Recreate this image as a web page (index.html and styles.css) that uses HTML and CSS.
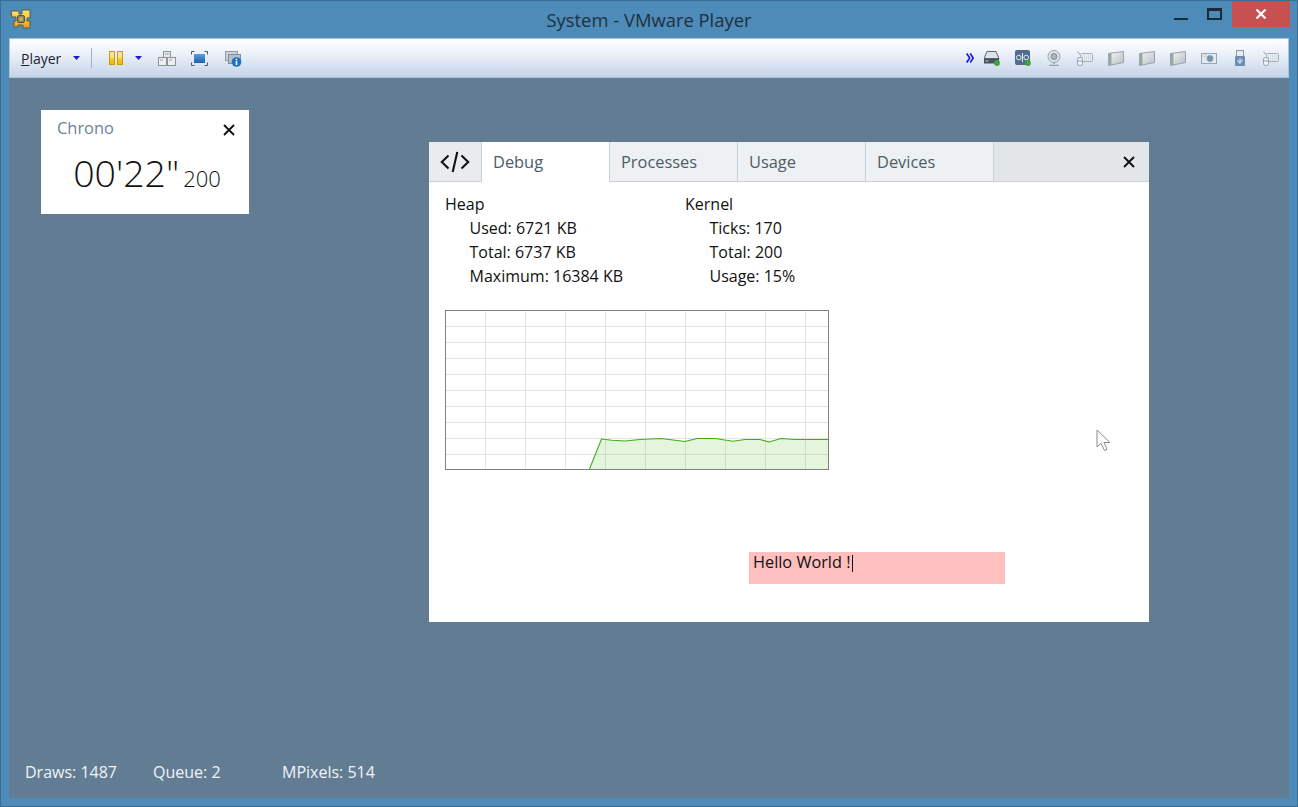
FILE: index.html
```html
<!DOCTYPE html>
<html lang="en">
<head>
    <meta charset="UTF-8">
    <title>System - VMware Player</title>
    <link rel="stylesheet" href="styles.css">
</head>
<body>
    <svg class="defs" width="0" height="0">
        <defs>
            <linearGradient id="logoFill" x1="0" y1="0" x2="0" y2="1">
                <stop offset="0" stop-color="#ffe27a"/>
                <stop offset="0.5" stop-color="#fcc43a"/>
                <stop offset="1" stop-color="#ee9a1c"/>
            </linearGradient>
            <linearGradient id="pauseFill" x1="0" y1="0" x2="0" y2="1">
                <stop offset="0" stop-color="#fbe89a"/>
                <stop offset="0.5" stop-color="#fde178"/>
                <stop offset="0.55" stop-color="#f8c820"/>
                <stop offset="1" stop-color="#f3b800"/>
            </linearGradient>
            <linearGradient id="diskFill" x1="0" y1="0" x2="1" y2="1">
                <stop offset="0" stop-color="#f6f8f8"/>
                <stop offset="1" stop-color="#b4bec2"/>
            </linearGradient>
            <linearGradient id="screenFill" x1="0" y1="0" x2="0" y2="1">
                <stop offset="0" stop-color="#5aa0e0"/>
                <stop offset="1" stop-color="#1c5fb0"/>
            </linearGradient>
            <symbol id="keyboard" viewBox="0 0 16 15">
                <path d="M0.5 0.5l3 3.5" stroke="#8f9ca6" fill="none"/>
                <rect x="3.5" y="2.5" width="12" height="8" rx="1" fill="#e8edf0" stroke="#a3afb8"/>
                <path d="M5 5h9M5 7h9M5 9h9" stroke="#c2ccd2" stroke-dasharray="1 1"/>
                <rect x="0.5" y="6.5" width="5" height="8" rx="2" fill="#f0f3f5" stroke="#93a0aa"/>
                <path d="M1 10h4" stroke="#93a0aa"/>
            </symbol>
            <symbol id="disk" viewBox="0 0 16 15">
                <path d="M0.5 2.5l15-2v11l-15 3z" fill="url(#diskFill)" stroke="#97a3a8"/>
                <path d="M0.5 2.5l3-.5v11.9l-3 .6z" fill="#9aa8ab"/>
                <rect x="1.2" y="10.5" width="1.4" height="1.6" fill="#8bc45a"/>
            </symbol>
            <symbol id="arrowDown" viewBox="0 0 7 4">
                <path d="M0 0h7L3.5 4z" fill="#1a1ad8"/>
            </symbol>
        </defs>
    </svg>

    <div class="window">
        <header class="titlebar">
            <svg class="app-logo" width="21" height="20" viewBox="0 0 21 20">
                <path d="M1 2h8v3h3V1h8v8h-3v3h3v7h-7v-3H8v2H4v-6h2V8H2z" fill="url(#logoFill)" stroke="#5d5a48"/>
                <rect x="7.5" y="6.5" width="7" height="7" rx="1.5" fill="#8a8672" stroke="#4c5560"/>
                <rect x="9.5" y="8.5" width="3" height="3" fill="#e8b83a"/>
            </svg>
            <span class="title">System - VMware Player</span>
            <div class="win-controls">
                <span class="win-min"></span>
                <span class="win-max"></span>
                <span class="win-close">
                    <svg width="12" height="10" viewBox="0 0 12 10"><path d="M1.5 0.5l9 9M10.5 0.5l-9 9" stroke="#fff" stroke-width="2.2"/></svg>
                </span>
            </div>
        </header>

        <nav class="toolbar">
            <span class="menu-label"><u>P</u>layer</span>
            <svg class="arrow arrow-player" width="7" height="4"><use href="#arrowDown"/></svg>
            <span class="tool-sep"></span>
            <svg class="tool-pause" width="14" height="14" viewBox="0 0 14 14">
                <rect x="0.5" y="0.5" width="5" height="13" fill="url(#pauseFill)" stroke="#c79a10"/>
                <rect x="8.5" y="0.5" width="5" height="13" fill="url(#pauseFill)" stroke="#c79a10"/>
            </svg>
            <svg class="arrow arrow-pause" width="7" height="4"><use href="#arrowDown"/></svg>
            <svg class="tool-keys" width="18" height="15" viewBox="0 0 18 15">
                <rect x="5.5" y="0.5" width="7" height="6" fill="#e6e9eb" stroke="#8f9396"/>
                <rect x="0.5" y="6.5" width="8" height="8" fill="#eceff1" stroke="#8f9396"/>
                <rect x="9.5" y="6.5" width="8" height="8" fill="#eceff1" stroke="#8f9396"/>
                <path d="M7 3h4M2 9h3M11 9h3" stroke="#9a9ea1"/>
            </svg>
            <svg class="tool-full" width="17" height="15" viewBox="0 0 17 15">
                <rect x="3" y="3" width="11" height="9" fill="url(#screenFill)"/>
                <path d="M0.5 3.5v-3h3M13.5 0.5h3v3M16.5 11.5v3h-3M3.5 14.5h-3v-3" stroke="#4b5a66" fill="none"/>
            </svg>
            <svg class="tool-info" width="17" height="16" viewBox="0 0 17 16">
                <rect x="0.5" y="0.5" width="12" height="9" fill="#c9d2d9" stroke="#8f9ca8"/>
                <rect x="3.5" y="3.5" width="12" height="9" fill="#b4bfc9" stroke="#8090a0"/>
                <circle cx="11.5" cy="11" r="4.8" fill="#1f6fc0"/>
                <path d="M11.5 7.8v1.4M11.5 10v4" stroke="#fff" stroke-width="1.6"/>
            </svg>

            <div class="device-tray">
                <svg class="tray-more" width="8" height="10" viewBox="0 0 8 10"><path d="M0.7 0.5l3 4.5-3 4.5M4.2 0.5l3 4.5-3 4.5" stroke="#1414e0" stroke-width="1.6" fill="none"/></svg>
                <svg class="device-hdd" width="16" height="15" viewBox="0 0 16 15">
                    <path d="M3 0.5h9l3 7H0z" fill="#dfe3e6" stroke="#5f6a72"/>
                    <rect x="0" y="7.5" width="15" height="5" fill="#465260"/>
                    <rect x="1.5" y="9.5" width="3" height="1" fill="#c6ccd0"/>
                    <circle cx="13" cy="12" r="2.9" fill="#3fa535"/>
                </svg>
                <svg class="device-tape" width="16" height="16" viewBox="0 0 16 16">
                    <rect x="0" y="0" width="15" height="15" rx="2" fill="#4f6c8c"/>
                    <circle cx="3.8" cy="7.5" r="2.3" fill="none" stroke="#e6edf3"/>
                    <circle cx="11.2" cy="7.5" r="2.3" fill="none" stroke="#e6edf3"/>
                    <path d="M7.5 3v9" stroke="#e6edf3"/>
                    <circle cx="13" cy="13" r="2.9" fill="#3fa535"/>
                </svg>
                <svg class="device-cam" width="14" height="16" viewBox="0 0 14 16">
                    <circle cx="7" cy="6.5" r="6" fill="#dde3e8" stroke="#97a3ac"/>
                    <circle cx="7" cy="6.5" r="3" fill="#a9b6c0" stroke="#7f8c96"/>
                    <path d="M7 12.5v1.5M2 15.5h10" stroke="#97a3ac" stroke-width="1.4"/>
                </svg>
                <svg class="device-kb" width="16" height="15"><use href="#keyboard"/></svg>
                <svg class="device-disk" width="16" height="15"><use href="#disk"/></svg>
                <svg class="device-disk" width="16" height="15"><use href="#disk"/></svg>
                <svg class="device-disk" width="16" height="15"><use href="#disk"/></svg>
                <svg class="device-photo" width="16" height="12" viewBox="0 0 16 12">
                    <rect x="0.5" y="1.5" width="15" height="10" fill="#e4eaee" stroke="#9aa8b2"/>
                    <circle cx="9" cy="6.5" r="3" fill="#6f95b5" stroke="#8aa0b0"/>
                    <rect x="2" y="3" width="3" height="1.5" fill="#fff" stroke="#a7b3bb" stroke-width="0.5"/>
                </svg>
                <svg class="device-usb" width="10" height="16" viewBox="0 0 10 16">
                    <rect x="1.5" y="0.5" width="7" height="6" fill="#e8ecef" stroke="#8f9aa3"/>
                    <rect x="0" y="6" width="10" height="10" rx="1" fill="#6f8cb4"/>
                    <path d="M5 8v6M3 10v1.5l2 1M7 9.5v1.5l-2 1" stroke="#e6edf3" fill="none"/>
                </svg>
                <svg class="device-kb" width="16" height="15"><use href="#keyboard"/></svg>
            </div>
        </nav>

        <main class="desktop">
            <section class="chrono">
                <div class="chrono-head">
                    <span class="chrono-title">Chrono</span>
                    <svg class="close-x chrono-close" width="12" height="12" viewBox="0 0 12 12"><path d="M1 1l10 10M11 1L1 11" stroke="#111" stroke-width="1.9"/></svg>
                </div>
                <div class="chrono-time">00'22"<small>200</small></div>
            </section>

            <section class="debug">
                <div class="tabs">
                    <div class="tab tab-code">
                        <svg width="30" height="22" viewBox="0 0 30 22"><path d="M8.5 4.5L1.8 11l6.7 6.5M21.5 4.5L28.2 11l-6.7 6.5M17.3 1L12.7 21" stroke="#111" stroke-width="2.1" fill="none"/></svg>
                    </div>
                    <div class="tab tab-active">Debug</div>
                    <div class="tab">Processes</div>
                    <div class="tab">Usage</div>
                    <div class="tab">Devices</div>
                    <div class="tab-rest">
                        <svg class="close-x" width="12" height="12" viewBox="0 0 12 12"><path d="M1 1l10 10M11 1L1 11" stroke="#111" stroke-width="1.9"/></svg>
                    </div>
                </div>

                <div class="debug-body">
                    <div class="stats">
                        <div class="stat-col">
                            <div>Heap</div>
                            <div class="stat-row">Used: 6721 KB</div>
                            <div class="stat-row">Total: 6737 KB</div>
                            <div class="stat-row">Maximum: 16384 KB</div>
                        </div>
                        <div class="stat-col">
                            <div>Kernel</div>
                            <div class="stat-row">Ticks: 170</div>
                            <div class="stat-row">Total: 200</div>
                            <div class="stat-row">Usage: 15%</div>
                        </div>
                    </div>

                    <svg class="chart" width="384" height="160" viewBox="0 0 384 160">
                        <path class="chart-grid" d="M40.5 0V160M80.5 0V160M120.5 0V160M160.5 0V160M200.5 0V160M240.5 0V160M280.5 0V160M320.5 0V160M360.5 0V160M0 16.5H384M0 32.5H384M0 48.5H384M0 64.5H384M0 80.5H384M0 96.5H384M0 112.5H384M0 128.5H384M0 144.5H384"/>
                        <path class="chart-area" d="M144.5 159L156.5 129L167 130.3L180 131L195 129.5L216 128.5L240 131.5L252 128.5L270 128.5L288 131.3L300 129.5L315 129.5L324 132L336 128.5L350 129.5L383 129.5V159Z"/>
                        <path class="chart-line" d="M144.5 159L156.5 129L167 130.3L180 131L195 129.5L216 128.5L240 131.5L252 128.5L270 128.5L288 131.3L300 129.5L315 129.5L324 132L336 128.5L350 129.5L383 129.5"/>
                        <rect class="chart-frame" x="0.5" y="0.5" width="383" height="159"/>
                    </svg>

                    <div class="hello">Hello World !<span class="caret"></span></div>
                </div>

                <svg class="mouse" width="16" height="23" viewBox="0 0 16 23">
                    <path d="M1 1V18L5 14.3L8.5 21.5L11 20.3L8 13.5H14Z" fill="#fff" stroke="#8a8a8a"/>
                </svg>
            </section>

            <footer class="status">
                <span class="status-draws">Draws: 1487</span>
                <span class="status-queue">Queue: 2</span>
                <span>MPixels: 514</span>
            </footer>
        </main>
    </div>
</body>
</html>
```

FILE: styles.css
```css
html, body {
    margin: 0;
    height: 100%;
}
body {
    font-family: "Open Sans", sans-serif;
    overflow: hidden;
}
.defs {
    position: absolute;
}
svg {
    display: block;
    flex: none;
}
.window {
    width: 1298px;
    height: 807px;
    box-sizing: border-box;
    background-color: #4d8bb9;
    border: 1px solid #3b6e94;
    padding: 0 8px 8px 8px;
    display: flex;
    flex-direction: column;
}

/* title bar */
.titlebar {
    height: 37px;
    flex: none;
    position: relative;
    display: flex;
    align-items: flex-start;
}
.app-logo {
    margin: 8px 0 0 1px;
}
.title {
    position: absolute;
    left: 0;
    right: 0;
    top: 6px;
    text-align: center;
    font-size: 18.4px;
    line-height: 26px;
    color: #22303e;
}
.win-controls {
    margin-left: auto;
    margin-right: -1px;
    display: flex;
    align-items: flex-start;
}
.win-min {
    width: 14px;
    height: 2px;
    margin-top: 17px;
    background-color: #1c2a38;
}
.win-max {
    width: 11px;
    height: 7px;
    margin: 7px 0 0 19px;
    border: 2px solid #1c2a38;
    border-top-width: 3px;
}
.win-close {
    width: 58px;
    height: 26px;
    margin-left: 10px;
    background-color: #c75050;
    display: flex;
    align-items: center;
    justify-content: center;
}

/* toolbar */
.toolbar {
    height: 40px;
    flex: none;
    box-sizing: border-box;
    border: 1px solid #a9c3da;
    background: linear-gradient(#fdfeff, #eef3fa 35%, #c4d4e8);
    display: flex;
    align-items: center;
    padding-left: 11px;
}
.menu-label {
    font-size: 14px;
    color: #1e2430;
    margin-top: 1px;
}
.arrow-player {
    margin-left: 12px;
}
.tool-sep {
    width: 1px;
    height: 20px;
    background-color: #9db3c9;
    margin-left: 11px;
}
.tool-pause {
    margin-left: 17px;
}
.arrow-pause {
    margin-left: 12px;
}
.tool-keys {
    margin-left: 16px;
}
.tool-full {
    margin-left: 15px;
}
.tool-info {
    margin-left: 17px;
    margin-top: 2px;
}
.device-tray {
    margin-left: auto;
    margin-right: 9px;
    display: flex;
    align-items: center;
    gap: 15px;
}
.tray-more {
    margin-right: -5px;
}
.device-cam,
.device-kb {
    margin-left: 1px;
}
.device-kb + .device-disk {
    margin-left: 0;
}
.device-usb {
    margin-left: 3px;
    margin-right: 2px;
}

/* desktop */
.desktop {
    flex: 1;
    position: relative;
    background-color: #627c94;
    display: flex;
    flex-direction: column;
    justify-content: flex-end;
}
.chrono {
    position: absolute;
    left: 32px;
    top: 32px;
    width: 208px;
    height: 104px;
    background-color: #fff;
}
.chrono-head {
    display: flex;
    justify-content: space-between;
    align-items: center;
    padding: 5px 14px 0 16px;
    height: 24px;
}
.chrono-title {
    font-size: 16.4px;
    color: #6a8299;
}
.chrono-close {
    margin-top: 6px;
}
.chrono-time {
    box-sizing: border-box;
    padding-left: 4px;
    text-align: center;
    font-size: 37.5px;
    font-weight: 300;
    color: #111;
    line-height: 50px;
    margin-top: 9px;
}
.chrono-time small {
    font-size: 22px;
    margin-left: 4px;
}

/* debug window */
.debug {
    position: absolute;
    left: 420px;
    top: 64px;
    width: 720px;
    height: 480px;
    background-color: #fff;
}
.tabs {
    display: flex;
    height: 40px;
}
.tab {
    width: 127px;
    border-right: 1px solid #c8d2d6;
    border-bottom: 1px solid #c8d2d6;
    height: 39px;
    line-height: 39px;
    text-indent: 11px;
    font-size: 16.4px;
    color: #4c5c68;
    background-color: #eef1f3;
}
.tab-code {
    width: 52px;
    text-indent: 0;
    display: flex;
    align-items: center;
    justify-content: center;
    background-color: #e8ecee;
}
.tab-active {
    background-color: #fff;
    border-bottom-color: #fff;
}
.tab-rest {
    flex: 1;
    height: 39px;
    background-color: #e2e6e9;
    border-bottom: 1px solid #c8d2d6;
    display: flex;
    justify-content: flex-end;
    align-items: center;
    padding-right: 14px;
}
.debug-body {
    padding: 10px 16px 0 16px;
}
.stats {
    display: flex;
    font-size: 16px;
    line-height: 24px;
    color: #111;
}
.stat-col {
    width: 240px;
}
.stat-row {
    padding-left: 24.5px;
}
.chart {
    margin-top: 22px;
}
.chart-grid {
    stroke: #e4e4e4;
    fill: none;
}
.chart-area {
    fill: #5fb82e;
    fill-opacity: 0.16;
}
.chart-line {
    stroke: #3cb014;
    stroke-width: 1.1;
    fill: none;
}
.chart-frame {
    stroke: #808080;
    fill: none;
}
.hello {
    width: 256px;
    height: 32px;
    box-sizing: border-box;
    margin: 82px 0 0 304px;
    padding-left: 4px;
    background-color: #ffbfbf;
    font-size: 16.3px;
    line-height: 21px;
    color: #111;
    display: flex;
    align-items: flex-start;
}
.caret {
    display: inline-block;
    width: 1px;
    height: 17px;
    margin: 3px 0 0 2px;
    background-color: #111;
}
.mouse {
    position: absolute;
    left: 667px;
    top: 287px;
}

/* status line */
.status {
    display: flex;
    padding: 0 0 14px 16px;
    font-size: 16px;
    line-height: 24px;
    color: #f0f4f7;
}
.status-draws {
    width: 128px;
}
.status-queue {
    width: 129px;
}
```
